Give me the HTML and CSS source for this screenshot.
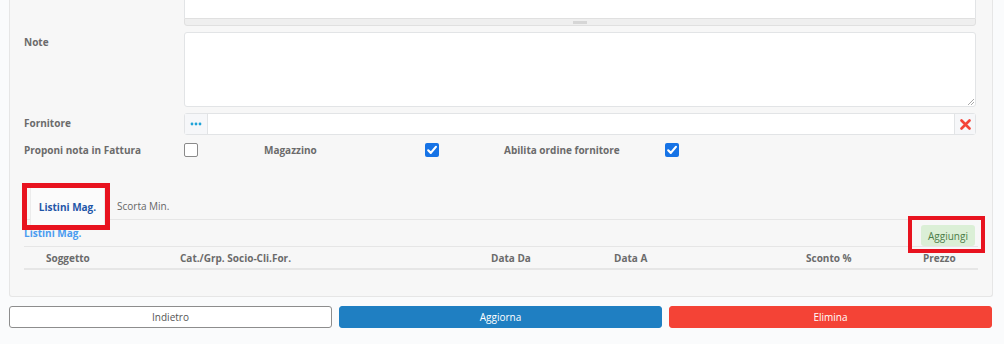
FILE: index.html
```html
<!DOCTYPE html>
<html lang="it">
<head>
    <meta charset="UTF-8">
    <meta name="viewport" content="width=device-width, initial-scale=1.0">
    <title>Articolo</title>
    <link rel="stylesheet" href="styles.css">
</head>
<body>
    <div class="panel">
        <!-- Descrizione (textarea ridimensionabile, parte alta fuori schermo) -->
        <div class="form-row row-top">
            <div class="label"></div>
            <div class="field">
                <div class="textarea textarea-top"></div>
                <div class="grip"><span></span></div>
            </div>
        </div>

        <div class="form-row row-note">
            <div class="label">Note</div>
            <div class="field">
                <div class="textarea textarea-note"><span class="resize"></span></div>
            </div>
        </div>

        <div class="form-row row-fornitore">
            <div class="label">Fornitore</div>
            <div class="field input-group">
                <span class="addon addon-dots">
                    <svg width="12" height="4" viewBox="0 0 12 4"><circle cx="2" cy="2" r="1.4" fill="#1ea3d8"/><circle cx="6" cy="2" r="1.4" fill="#1ea3d8"/><circle cx="10" cy="2" r="1.4" fill="#1ea3d8"/></svg>
                </span>
                <span class="input"></span>
                <span class="addon addon-clear">
                    <svg width="11" height="11" viewBox="0 0 11 11"><path d="M1.5 1.5 L9.5 9.5 M9.5 1.5 L1.5 9.5" stroke="#f44336" stroke-width="2.6" stroke-linecap="round"/></svg>
                </span>
            </div>
        </div>

        <div class="check-row">
            <div class="label">Proponi nota in Fattura</div>
            <div><span class="checkbox"></span></div>
            <div class="label">Magazzino</div>
            <div><span class="checkbox checked"><svg width="14" height="14" viewBox="0 0 14 14"><path d="M3.2 7.3 L5.8 9.9 L10.9 3.9" fill="none" stroke="#fff" stroke-width="2.2" stroke-linecap="round" stroke-linejoin="round"/></svg></span></div>
            <div class="label">Abilita ordine fornitore</div>
            <div><span class="checkbox checked"><svg width="14" height="14" viewBox="0 0 14 14"><path d="M3.2 7.3 L5.8 9.9 L10.9 3.9" fill="none" stroke="#fff" stroke-width="2.2" stroke-linecap="round" stroke-linejoin="round"/></svg></span></div>
        </div>

        <!-- Schede -->
        <div class="tabs">
            <div class="tab active highlight">Listini Mag.</div>
            <div class="tab">Scorta Min.</div>
        </div>

        <div class="tab-content">
            <div class="list-head">
                <span class="list-title">Listini Mag.</span>
                <button class="btn-add highlight">Aggiungi</button>
            </div>
            <div class="table-head">
                <span>Soggetto</span>
                <span>Cat./Grp. Socio-Cli.For.</span>
                <span>Data Da</span>
                <span>Data A</span>
                <span>Sconto %</span>
                <span>Prezzo</span>
            </div>
        </div>
    </div>

    <div class="actions">
        <button class="btn btn-back">Indietro</button>
        <button class="btn btn-update">Aggiorna</button>
        <button class="btn btn-delete">Elimina</button>
    </div>
</body>
</html>
```

FILE: styles.css
```css
body {
    margin: 0;
    padding: 0 11px 0 9px;
    background-color: #fafbfc;
    font-family: "Open Sans", Arial, sans-serif;
    font-size: 10px;
    color: #666;
}

.panel {
    margin-top: -20px;
    padding: 0 16px 26px 14px;
    background-color: #f7f7f7;
    border: 1px solid #e6e6e6;
    border-top: none;
    border-radius: 0 0 3px 3px;
}

.form-row {
    display: grid;
    grid-template-columns: 160px 1fr;
}

.label {
    font-weight: 700;
    color: #6b6b6b;
}

.textarea {
    background-color: #fff;
    border: 1px solid #e2e4e6;
    border-radius: 3px;
    position: relative;
}

.textarea-top {
    height: 37px;
    border-radius: 0;
    border-bottom: none;
}

.grip {
    height: 6px;
    background-color: #efefef;
    border: 1px solid #e0e0e0;
    border-radius: 0 0 3px 3px;
    display: flex;
    justify-content: center;
    align-items: center;
}

.grip span {
    width: 14px;
    height: 3px;
    background-color: #d6d6d6;
}

.row-note {
    margin-top: 6px;
}

.row-note .label {
    padding-top: 3px;
}

.textarea-note {
    height: 73px;
}

.resize {
    position: absolute;
    right: 1px;
    bottom: 1px;
    width: 6px;
    height: 6px;
    background: linear-gradient(135deg, transparent 45%, #aaa 45%, #aaa 55%, transparent 55%, transparent 70%, #aaa 70%, #aaa 80%, transparent 80%);
}

.row-fornitore {
    margin-top: 6px;
    align-items: center;
}

.row-fornitore .label {
    margin-top: -3px;
}

.input-group {
    display: flex;
    height: 20px;
    border: 1px solid #e2e4e6;
    border-radius: 3px;
    background-color: #fff;
}

.addon {
    display: flex;
    align-items: center;
    justify-content: center;
    width: 22px;
    background-color: #f6f7f9;
}

.addon-dots {
    border-right: 1px solid #e2e4e6;
}

.addon-clear {
    width: 20px;
    border-left: 1px solid #e2e4e6;
}

.input {
    flex: 1;
}

.check-row {
    display: grid;
    grid-template-columns: 160px 80px 161px 79px 161px auto;
    align-items: center;
    margin-top: 8px;
    height: 14px;
}

.checkbox {
    display: block;
    width: 12px;
    height: 12px;
    border: 1px solid #8a8a8a;
    border-radius: 2px;
    background-color: #fff;
}

.checkbox.checked {
    width: 14px;
    height: 14px;
    border: none;
    background-color: #1673e6;
}

.checkbox svg {
    display: block;
}

.tabs {
    display: flex;
    align-items: flex-start;
    height: 32px;
    margin-top: 30px;
    padding-left: 6px;
    border-bottom: 1px solid #e6e6e6;
}

.tab {
    height: 38px;
    padding: 0 12px;
    display: flex;
    align-items: center;
    color: #666;
}

.tab.active {
    width: 75px;
    box-sizing: border-box;
    padding: 0;
    justify-content: center;
    background-color: #fbfbfb;
    border: 1px solid #ececec;
    border-bottom: none;
    color: #1f56a8;
    font-weight: 700;
}

/* riquadro rosso di evidenziazione */
.highlight {
    position: relative;
}

.highlight::after {
    content: "";
    position: absolute;
    border: 4px solid #e8131f;
    pointer-events: none;
}

.tab.highlight::after {
    top: -5px;
    right: -6px;
    bottom: -5px;
    left: -9px;
    border-width: 5px;
}

.list-head {
    display: flex;
    justify-content: space-between;
    align-items: flex-start;
    padding-right: 1px;
}

.list-title {
    color: #4a9cf0;
    font-weight: 700;
    margin-top: 6px;
}

.btn-add {
    margin-top: 5px;
    height: 21px;
    width: 54px;
    padding: 0;
    border: none;
    border-radius: 3px;
    background-color: #dbefd6;
    color: #4b7d48;
    font-family: "Open Sans", Arial, sans-serif;
    font-size: 10px;
}

.btn-add.highlight::after {
    top: -9px;
    right: -10px;
    bottom: -7px;
    left: -13px;
}

.table-head {
    display: grid;
    grid-template-columns: 134px 311px 123px 192px 117px auto;
    padding-left: 22px;
    height: 21px;
    align-items: center;
    border-top: 1px solid #e6e6e6;
    border-bottom: 2px solid #e6e6e6;
    margin-right: -2px;
    font-weight: 700;
    color: #6b6b6b;
}

.actions {
    display: grid;
    grid-template-columns: 1fr 1fr 1fr;
    gap: 7px;
    margin-top: 9px;
    margin-right: 1px;
}

.btn {
    height: 22px;
    border-radius: 3px;
    font-family: "Open Sans", Arial, sans-serif;
    font-size: 10px;
    cursor: pointer;
}

.btn-back {
    background-color: #fff;
    border: 1.5px solid #8d8d8d;
    color: #555;
}

.btn-update {
    background-color: #1f7fc2;
    border: 1px solid #1f7fc2;
    color: #fff;
}

.btn-delete {
    background-color: #f44336;
    border: 1px solid #f44336;
    color: #fff;
}
```
